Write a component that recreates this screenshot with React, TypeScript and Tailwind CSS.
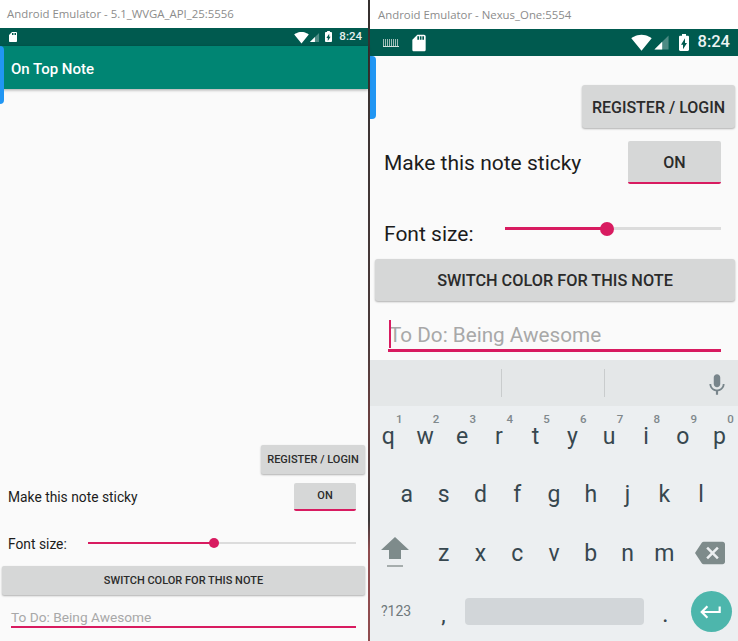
import React from "react";

const Wifi = ({ c }: { c: string }) => (
  <svg viewBox="0 0 24 24" className={c} fill="#fff"><path d="M12.01 21.49L23.64 7c-.45-.34-4.93-4-11.64-4C5.28 3 .81 6.66.36 7l11.64 14.49z" /></svg>
);
const Signal = ({ c }: { c: string }) => (
  <svg viewBox="0 0 24 24" className={c}>
    <path d="M2 22L22 2v20z" fill="#fff" fillOpacity="0.3" />
    <path d="M2 22L13 11v11z" fill="#fff" />
  </svg>
);
const Battery = ({ c }: { c: string }) => (
  <svg viewBox="7 2 10 20" preserveAspectRatio="none" className={c} fill="#fff"><path d="M15.67 4H14V2h-4v2H8.33C7.6 4 7 4.6 7 5.33v15.33C7 21.4 7.6 22 8.33 22h7.33c.74 0 1.34-.6 1.34-1.33V5.33C17 4.6 16.4 4 15.67 4zM11 20v-5.5H9L13 7v5.5h2L11 20z" /></svg>
);
const Sd = ({ c }: { c: string }) => (
  <svg viewBox="0 0 24 24" className={c} fill="#fff"><path d="M18 2h-8L4.02 8 4 20c0 1.1.9 2 2 2h12c1.1 0 2-.9 2-2V4c0-1.1-.9-2-2-2zm-6 6h-2V4h2v4zm3 0h-2V4h2v4zm3 0h-2V4h2v4z" /></svg>
);
const Handle = ({ c }: { c: string }) => <div className={`absolute left-0 bg-[#2196f3] rounded-r-[4px] ${c}`} />;

const Title = ({ t, c }: { t: string; c: string }) => (
  <div className={`bg-white flex items-center text-[11.4px] text-[#8c8c8c] font-['Open_Sans',sans-serif] shrink-0 ${c}`}>{t}</div>
);

const Row1 = ["q", "w", "e", "r", "t", "y", "u", "i", "o", "p"];
const Hints = ["1", "2", "3", "4", "5", "6", "7", "8", "9", "0"];
const Row2 = ["a", "s", "d", "f", "g", "h", "j", "k", "l"];
const Row3 = ["z", "x", "c", "v", "b", "n", "m"];

const Key = ({ k, hint }: { k: string; hint?: string }) => (
  <div className="relative w-[36.8px] flex items-center justify-center pt-[3px] text-[23px] text-[#37474f] font-['Roboto',sans-serif]">
    {k}
    {hint && <span className="absolute left-[26px] top-[6px] text-[11.5px] leading-[14px] font-medium text-[#80888c]">{hint}</span>}
  </div>
);

export default function App() {
  return (
    <div className="relative w-[738px] h-[641px] overflow-hidden flex bg-white font-['Roboto',sans-serif]">
      {/* Left emulator */}
      <div className="relative w-[368px] h-full flex flex-col bg-[#fafafa]">
        <Title t="Android Emulator - 5.1_WVGA_API_25:5556" c="h-[28px] pl-[7px]" />
        <div className="h-[18px] bg-[#005a4f] flex items-center pl-[7px] pr-[6px] shrink-0">
          <Sd c="w-[12px] h-[12px]" />
          <div className="ml-auto flex items-center">
            <Wifi c="w-[15px] h-[15px]" />
            <Signal c="w-[11px] h-[11px] mt-[1px]" />
            <Battery c="w-[7px] h-[11px] ml-[5px] -mt-[2px]" />
            <span className="ml-[7px] text-[11.5px] font-medium text-[#e6f0ee]">8:24</span>
          </div>
        </div>
        <div className="h-[43px] bg-[#008573] flex items-center pl-[11px] pt-[4px] text-[15px] font-medium text-white shrink-0 shadow-[0_1px_3px_rgba(0,0,0,0.35)] z-10">
          On Top Note
        </div>
        <div className="flex-1 flex flex-col justify-end pb-[13px] pr-[3px]">
          <div className="flex justify-end">
            <div className="w-[104px] h-[29px] rounded-[2px] bg-[#d6d7d7] shadow-[0_1px_2px_rgba(0,0,0,0.3)] flex items-center justify-center pt-[1px] text-[11px] font-medium text-[#2b2b2b]">REGISTER / LOGIN</div>
          </div>
          <div className="flex items-center justify-between mt-[9px] pl-[8px] pr-[9px]">
            <span className="text-[13.8px] text-[#1c1c1c]">Make this note sticky</span>
            <div className="w-[62px] h-[28px] rounded-[2px] bg-[#d6d7d7] border-b-2 border-[#d81b60] flex items-center justify-center text-[11px] font-medium text-[#2b2b2b]">ON</div>
          </div>
          <div className="flex items-center mt-[20px] pl-[8px] pr-[9px] h-[27px]">
            <span className="w-[80px] text-[13.8px] text-[#1c1c1c] shrink-0">Font size:</span>
            <div className="relative flex-1 h-[2px] bg-[#dcdcdc] -mt-[3px]">
              <div className="h-full w-[47%] bg-[#d81b60]" />
              <div className="absolute left-[47%] top-[-4px] -ml-[5px] w-[10px] h-[10px] rounded-full bg-[#d81b60]" />
            </div>
          </div>
          <div className="mt-[8px] ml-[2px] h-[29px] rounded-[2px] bg-[#d6d7d7] shadow-[0_1px_2px_rgba(0,0,0,0.3)] flex items-center justify-center pt-[1px] text-[11px] font-medium text-[#2b2b2b]">SWITCH COLOR FOR THIS NOTE</div>
          <div className="mt-[12px] ml-[11px] mr-[9px] h-[21px] border-b-2 border-[#d81b60] text-[13.7px] leading-[20px] text-[#a8a8a8]">To Do: Being Awesome</div>
        </div>
        <Handle c="top-[46px] w-[4px] h-[58px] z-20" />
      </div>

      {/* Divider */}
      <div className="w-[2px] h-full shrink-0 bg-[linear-gradient(to_bottom,#35302f_0,#4a3a3a_340px,#6b4040_420px,#3c3a3a_520px,#8f4c4f_550px,#8f4c4f_641px)]" />

      {/* Right emulator */}
      <div className="relative flex-1 h-full flex flex-col bg-[#fafafa]">
        <Title t="Android Emulator - Nexus_One:5554" c="h-[29px] pl-[8px]" />
        <div className="h-[27px] bg-[#005a4f] flex items-center pl-[13px] pr-[8px] shrink-0">
          <div className="w-[16px] h-[8px] mr-[10px] border-b border-[#cfe0dc] bg-[repeating-linear-gradient(to_right,#9fbdb7_0,#9fbdb7_1px,#005a4f_1px,#005a4f_2px)]" />
          <Sd c="w-[20px] h-[20px]" />
          <div className="ml-auto flex items-center">
            <Wifi c="w-[21px] h-[21px]" />
            <Signal c="w-[17px] h-[17px] ml-[1px]" />
            <Battery c="w-[10px] h-[17px] ml-[9px]" />
            <span className="ml-[9px] text-[16.5px] font-medium text-[#eef4f3]">8:24</span>
          </div>
        </div>
        <div className="h-[304px] shrink-0 flex flex-col pt-[29px] pr-[3px]">
          <div className="flex justify-end">
            <div className="w-[153px] h-[43px] rounded-[3px] bg-[#d6d7d7] shadow-[0_1px_2px_rgba(0,0,0,0.3)] flex items-center justify-center pt-[2px] text-[16px] font-medium text-[#2b2b2b]">REGISTER / LOGIN</div>
          </div>
          <div className="flex items-center justify-between mt-[13px] pl-[14px] pr-[14px]">
            <span className="pt-[3px] text-[21px] text-[#1c1c1c]">Make this note sticky</span>
            <div className="w-[93px] h-[43px] rounded-[2px] bg-[#d6d7d7] border-b-2 border-[#d81b60] flex items-center justify-center pt-[2px] text-[16px] font-medium text-[#2b2b2b]">ON</div>
          </div>
          <div className="flex items-center mt-[29px] pl-[14px] pr-[14px] h-[40px]">
            <span className="w-[121px] pt-[3px] text-[21px] text-[#1c1c1c] shrink-0">Font size:</span>
            <div className="relative flex-1 h-[3px] bg-[#dcdcdc] -mt-[10px]">
              <div className="h-full w-[47%] bg-[#d81b60]" />
              <div className="absolute left-[47%] top-[-5px] -ml-[7px] w-[14px] h-[14px] rounded-full bg-[#d81b60]" />
            </div>
          </div>
          <div className="mt-[6px] ml-[5px] h-[42px] rounded-[3px] bg-[#d6d7d7] shadow-[0_1px_2px_rgba(0,0,0,0.3)] flex items-center justify-center pt-[3px] text-[16.3px] font-medium text-[#2b2b2b]">SWITCH COLOR FOR THIS NOTE</div>
          <div className="relative mt-[19px] ml-[18px] mr-[14px] h-[32px] border-b-[3px] border-[#d81b60] pl-[1px] pt-[1px] text-[20.7px] leading-[28px] text-[#a8a8a8]">
            To Do: Being Awesome
            <div className="absolute left-[1px] top-0 w-[2px] h-[28px] bg-[#d81b60]" />
          </div>
        </div>

        {/* Keyboard */}
        <div className="flex-1 flex flex-col bg-[#eceff1]">
          <div className="h-[46px] shrink-0 bg-[#e4e7e8] flex items-center">
            <div className="w-[132px] h-[28px] border-r border-[#c9cccd]" />
            <div className="w-[103px] h-[28px] border-r border-[#c9cccd]" />
            <div className="flex-1 flex justify-end pr-[8px] pt-[3px]">
              <svg viewBox="0 0 24 24" className="w-[26px] h-[26px]" fill="#78858b"><path d="M12 14c1.66 0 3-1.34 3-3V5c0-1.66-1.34-3-3-3S9 3.34 9 5v6c0 1.66 1.34 3 3 3zm5.3-3c0 3-2.54 5.1-5.3 5.1S6.7 14 6.7 11H5c0 3.41 2.72 6.23 6 6.72V21h2v-3.28c3.28-.48 6-3.3 6-6.72h-1.7z" /></svg>
            </div>
          </div>
          <div className="flex-1 flex">
            {Row1.map((k, i) => <Key key={k} k={k} hint={Hints[i]} />)}
          </div>
          <div className="flex-1 flex pl-[18.4px]">
            {Row2.map((k) => <Key key={k} k={k} />)}
          </div>
          <div className="flex-1 flex">
            <div className="w-[55.2px] flex flex-col items-center justify-center pb-[2px] pr-[6px]">
              <svg viewBox="0 0 28 22" className="w-[28px] h-[22px]" fill="#7e8b8b"><path d="M14 0L28 13H20V22H8V13H0z" /></svg>
              <div className="w-[16px] h-[2px] bg-[#a6adad] mt-[6px]" />
            </div>
            {Row3.map((k) => <Key key={k} k={k} />)}
            <div className="flex-1 flex items-center justify-center">
              <svg viewBox="0 0 24 24" className="w-[30px] h-[30px]" fill="#7e8b8b"><path d="M22 3H7c-.69 0-1.23.35-1.59.88L0 12l5.41 8.11c.36.53.9.89 1.59.89h15c1.1 0 2-.9 2-2V5c0-1.1-.9-2-2-2zm-3 12.59L17.59 17 14 13.41 10.41 17 9 15.59 12.59 12 9 8.41 10.41 7 14 10.59 17.59 7 19 8.41 15.41 12 19 15.59z" /></svg>
            </div>
          </div>
          <div className="flex-1 flex items-center">
            <div className="w-[55.2px] pl-[11px] text-[14px] text-[#70797c]">?123</div>
            <div className="w-[36.8px] text-center text-[20px] font-medium text-[#37474f] pt-[6px]">,</div>
            <div className="w-[179px] h-[27px] ml-[3px] rounded-[4px] bg-[#d2d6d9]" />
            <div className="w-[36.8px] ml-[3px] text-center text-[20px] font-medium text-[#37474f] pt-[6px]">.</div>
            <div className="ml-[7px] w-[41px] h-[41px] rounded-full bg-[#4db6ac] flex items-center justify-center">
              <svg viewBox="0 0 24 24" className="w-[26px] h-[26px]" fill="#fff"><path d="M19 7v4H5.83l3.58-3.59L8 6l-6 6 6 6 1.41-1.41L5.83 13H21V7z" /></svg>
            </div>
          </div>
        </div>
        <Handle c="top-[56px] w-[6px] h-[63px]" />
      </div>
    </div>
  );
}
